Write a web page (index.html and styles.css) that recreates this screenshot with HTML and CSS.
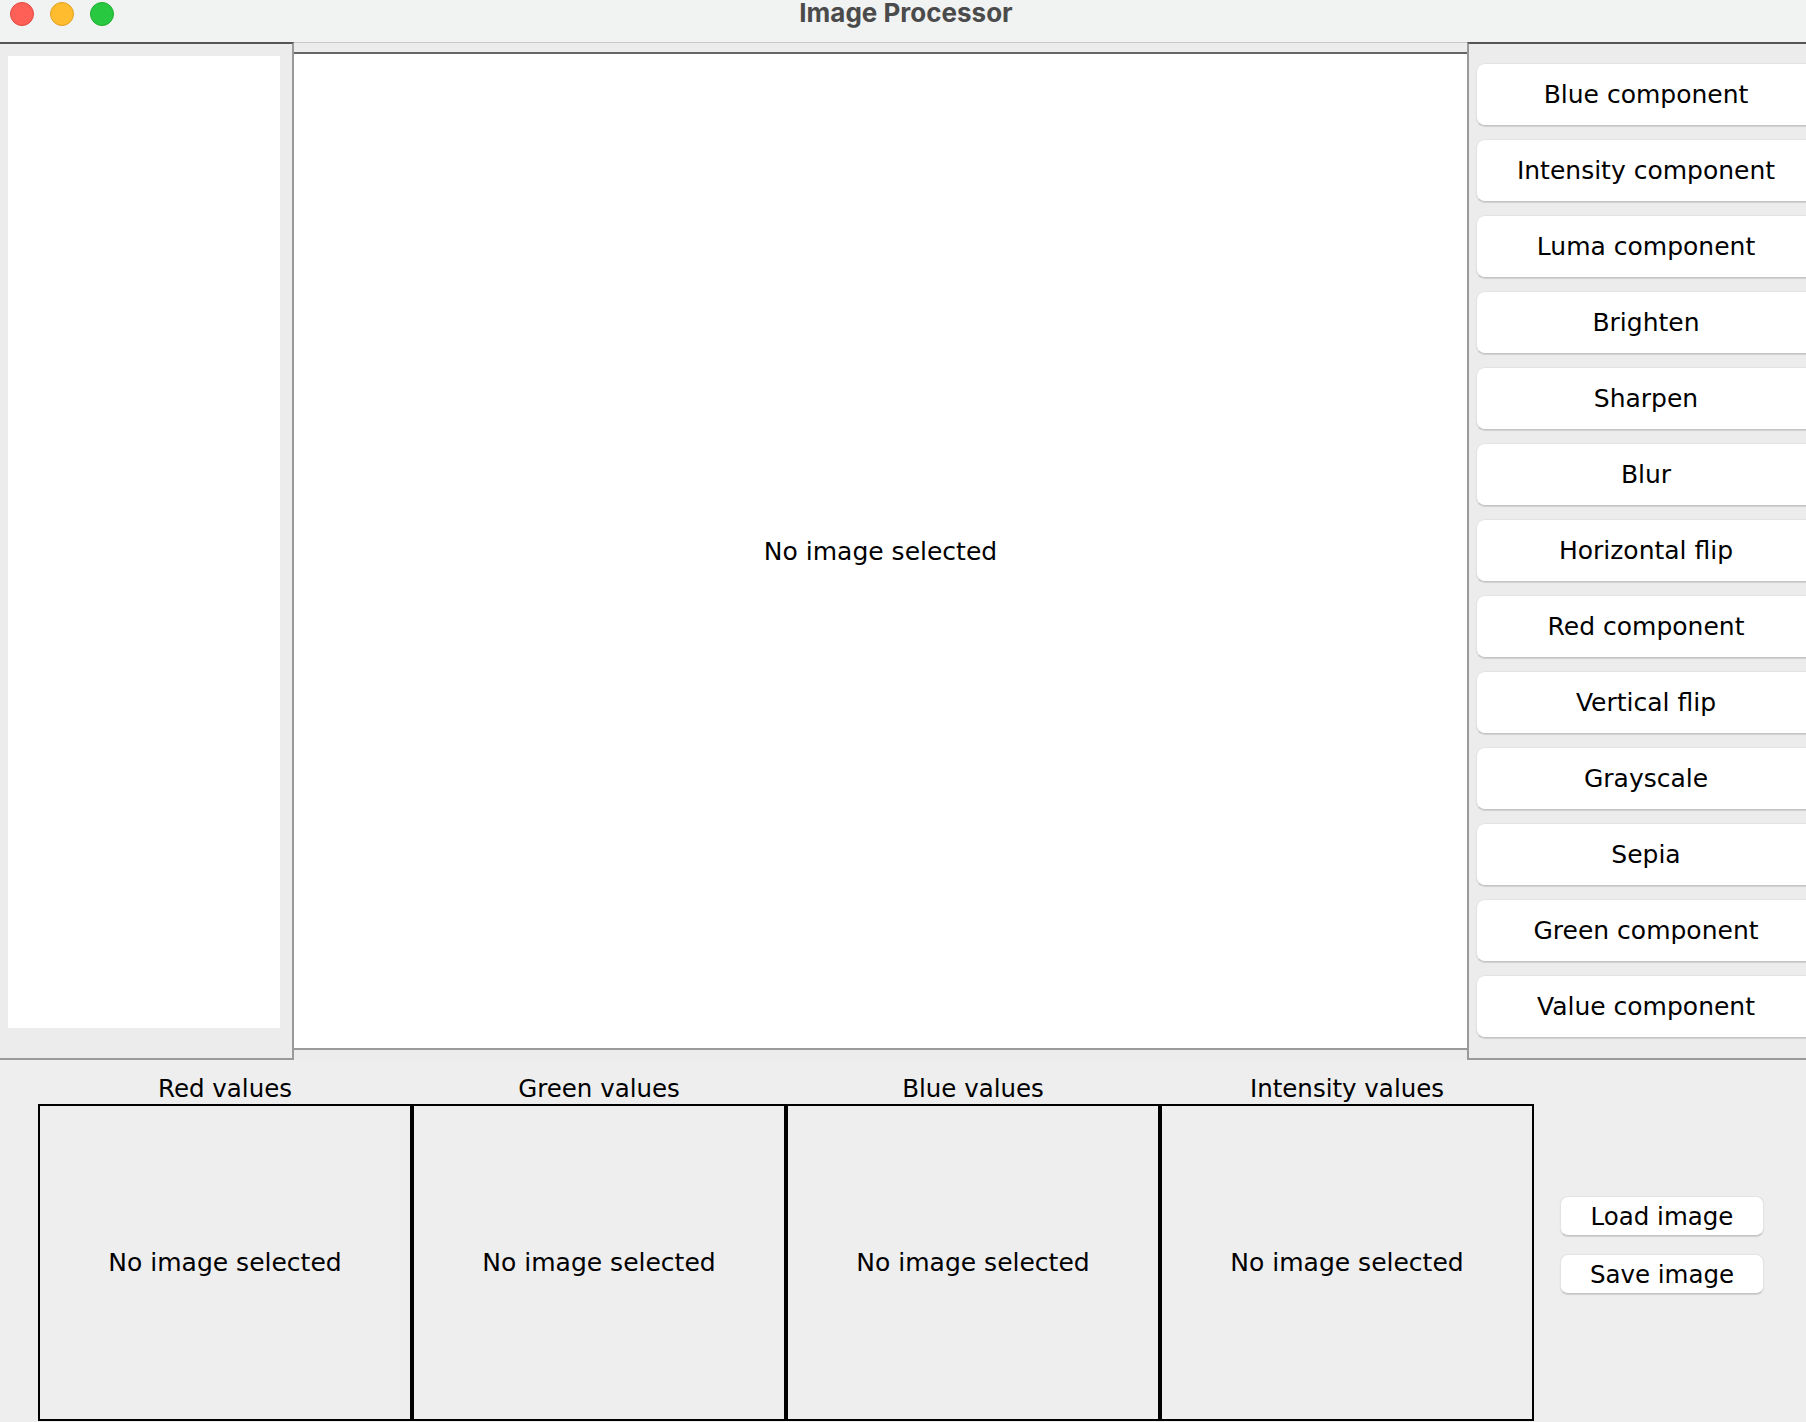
FILE: index.html
```html
<!DOCTYPE html>
<html>
<head>
<meta charset="utf-8">
<title>Image Processor</title>
<link rel="stylesheet" href="styles.css">
</head>
<body>
<div class="window">
  <header class="titlebar">
    <div class="lights">
      <span class="light red"></span>
      <span class="light yellow"></span>
      <span class="light green"></span>
    </div>
    <div class="title">Image Processor</div>
    <div class="spacer"></div>
  </header>
  <main class="main">
    <section class="left">
      <div class="list"></div>
    </section>
    <section class="center">
      <div class="viewport">No image selected</div>
    </section>
    <section class="right">
      <div class="ops">
        <button class="op">Blue component</button>
        <button class="op">Intensity component</button>
        <button class="op">Luma component</button>
        <button class="op">Brighten</button>
        <button class="op">Sharpen</button>
        <button class="op">Blur</button>
        <button class="op">Horizontal flip</button>
        <button class="op">Red component</button>
        <button class="op">Vertical flip</button>
        <button class="op">Grayscale</button>
        <button class="op">Sepia</button>
        <button class="op">Green component</button>
        <button class="op">Value component</button>
      </div>
    </section>
  </main>
  <footer class="bottom">
    <div class="histos">
      <div class="histo">
        <div class="hlabel">Red values</div>
        <div class="hbox">No image selected</div>
      </div>
      <div class="histo">
        <div class="hlabel">Green values</div>
        <div class="hbox">No image selected</div>
      </div>
      <div class="histo">
        <div class="hlabel">Blue values</div>
        <div class="hbox">No image selected</div>
      </div>
      <div class="histo">
        <div class="hlabel">Intensity values</div>
        <div class="hbox">No image selected</div>
      </div>
    </div>
    <div class="files">
      <button class="fbtn">Load image</button>
      <button class="fbtn">Save image</button>
    </div>
  </footer>
</div>
</body>
</html>
```

FILE: styles.css
```css
html, body {
  margin: 0;
  padding: 0;
}
body {
  width: 1806px;
  height: 1422px;
  overflow: hidden;
  background: #eeeeee;
  font-family: "DejaVu Sans", "Liberation Sans", sans-serif;
  color: #000;
}
.window {
  display: flex;
  flex-direction: column;
  width: 1806px;
  height: 1422px;
}
.titlebar {
  height: 42px;
  flex: none;
  background: #f1f3f3;
  display: grid;
  grid-template-columns: 1fr auto 1fr;
  align-items: start;
}
.lights {
  display: flex;
  gap: 16px;
  padding-left: 10px;
  padding-top: 2px;
}
.light {
  width: 22px;
  height: 22px;
  border-radius: 50%;
  border: 1px solid transparent;
}
.light.red { background: #fe5f57; border-color: #e2463f; }
.light.yellow { background: #febc2e; border-color: #dfa023; }
.light.green { background: #28c840; border-color: #1dad2b; }
.title {
  font-family: Inter, "Open Sans", sans-serif;
  font-weight: 700;
  font-size: 26px;
  line-height: 26px;
  color: #4b4b4b;
  padding-left: 6px;
}
.main {
  display: flex;
  height: 1018px;
  flex: none;
}
.left {
  width: 272px;
  flex: none;
  border-top: 2px solid #555555;
  border-right: 2px solid #9a9a9a;
  border-bottom: 2px solid #9a9a9a;
  padding: 12px 12px 30px 8px;
  display: flex;
  background: #ececec;
}
.list {
  flex: 1;
  background: #ffffff;
}
.center {
  flex: 1;
  display: flex;
  flex-direction: column;
  border-top: 1px solid #c9c9c9;
  padding-top: 9px;
  padding-bottom: 10px;
  background: #ececec;
}
.viewport {
  flex: 1;
  background: #ffffff;
  border-top: 2px solid #666666;
  border-bottom: 2px solid #9a9a9a;
  display: flex;
  align-items: center;
  justify-content: center;
  font-size: 25px;
}
.right {
  width: 330px;
  flex: none;
  border-top: 2px solid #555555;
  border-left: 2px solid #9a9a9a;
  border-bottom: 2px solid #9a9a9a;
  background: #ececec;
  overflow: hidden;
  padding: 19px 0 0 7px;
}
.ops {
  display: flex;
  flex-direction: column;
  gap: 13px;
  width: 340px;
}
.op, .fbtn {
  font-family: "DejaVu Sans", "Liberation Sans", sans-serif;
  font-size: 25px;
  color: #000;
  background: #ffffff;
  border: 1px solid #e3e3e3;
  border-bottom-color: #c4c4c4;
  border-radius: 9px;
  box-shadow: 0 1px 1px rgba(0, 0, 0, 0.12);
  padding: 0;
  margin: 0;
  display: flex;
  align-items: center;
  justify-content: center;
}
.op {
  height: 63px;
  width: 340px;
  flex: none;
}
.bottom {
  flex: 1;
  display: flex;
  align-items: flex-start;
}
.histos {
  display: flex;
  margin-left: 38px;
  padding-top: 14px;
}
.histo {
  width: 374px;
  display: flex;
  flex-direction: column;
}
.hlabel {
  font-size: 24.5px;
  line-height: 30px;
  height: 30px;
  text-align: center;
}
.hbox {
  height: 313px;
  border: 2px solid #000000;
  display: flex;
  align-items: center;
  justify-content: center;
  font-size: 25px;
}
.files {
  display: flex;
  flex-direction: column;
  gap: 18px;
  margin-left: 26px;
  padding-top: 136px;
}
.fbtn {
  width: 204px;
  height: 40px;
  font-size: 24.5px;
  border-radius: 8px;
}
```
